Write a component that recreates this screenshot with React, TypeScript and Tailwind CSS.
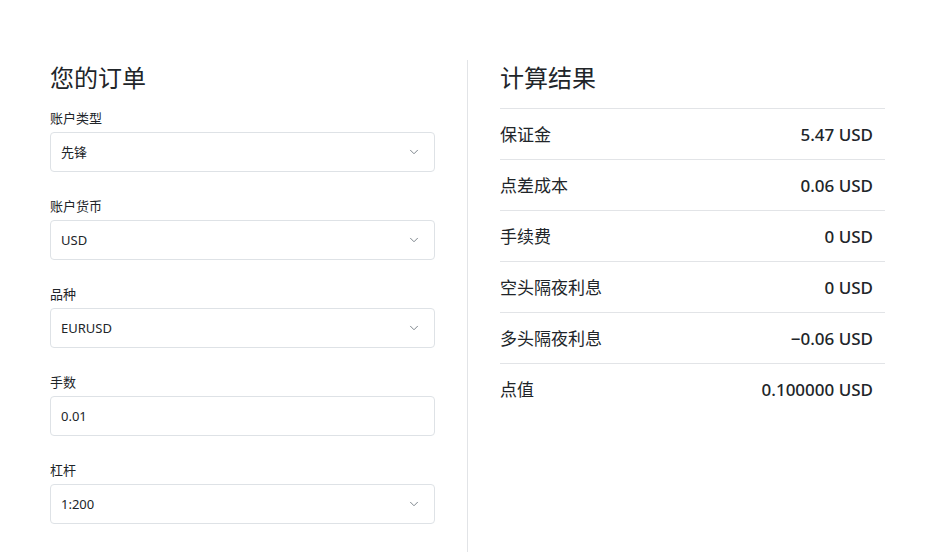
import { ChevronDown } from 'lucide-react'

const font = { fontFamily: '"Noto Sans", "Noto Sans CJK SC", sans-serif' }

const fields = [
  { label: '账户类型', value: '先锋', select: true },
  { label: '账户货币', value: 'USD', select: true },
  { label: '品种', value: 'EURUSD', select: true },
  { label: '手数', value: '0.01', select: false },
  { label: '杠杆', value: '1:200', select: true },
]

const results = [
  { label: '保证金', value: '5.47 USD' },
  { label: '点差成本', value: '0.06 USD' },
  { label: '手续费', value: '0 USD' },
  { label: '空头隔夜利息', value: '0 USD' },
  { label: '多头隔夜利息', value: '−0.06 USD' },
  { label: '点值', value: '0.100000 USD' },
]

export default function App() {
  return (
    <div style={font} className="w-[940px] h-[552px] bg-white text-[#212529] overflow-hidden">
      <div className="flex pt-[60px] pl-[50px] h-full">
        <div className="w-[385px] shrink-0">
          <h2 className="text-[24px] leading-[36px] font-normal mb-3">您的订单</h2>
          <div className="flex flex-col gap-6">
            {fields.map(f => (
              <div key={f.label}>
                <div className="text-[13px] leading-5 mb-1">{f.label}</div>
                <div className="h-10 border border-[#dee2e6] rounded-[4px] flex items-center justify-between pl-[10px] pr-[13px]">
                  <span className="text-[13px] mt-px">{f.value}</span>
                  {f.select && <ChevronDown className="w-3.5 h-3.5 text-[#6c757d]" strokeWidth={1.5} />}
                </div>
              </div>
            ))}
          </div>
        </div>

        <div className="w-px bg-[#e2e4e7] ml-8 mr-8 shrink-0" />

        <div className="w-[385px] shrink-0">
          <h2 className="text-[24px] leading-[36px] font-normal mb-3">计算结果</h2>
          <div className="border-t border-[#e2e4e7]">
            {results.map((r, i) => (
              <div
                key={r.label}
                className={`h-[51px] flex items-center justify-between pr-3 ${i < results.length - 1 ? 'border-b border-[#e2e4e7]' : ''}`}
              >
                <span className="text-[17px] mt-px">{r.label}</span>
                <span className="text-[17px] font-medium mt-px">{r.value}</span>
              </div>
            ))}
          </div>
        </div>
      </div>
    </div>
  )
}
